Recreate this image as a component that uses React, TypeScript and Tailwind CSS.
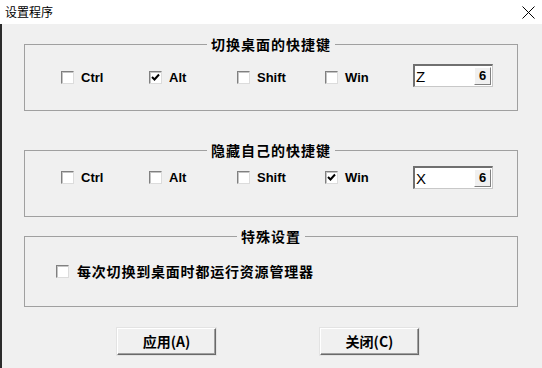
import React from "react";

const cjk = "font-['Noto_Sans_CJK_SC','Noto_Sans',sans-serif]";
const lat = "font-['Liberation_Sans',Arial,sans-serif]";

function CheckBox({ checked }: { checked?: boolean }) {
  return (
    <span className="flex items-center justify-center w-[13px] h-[13px] shrink-0 bg-white border border-t-[#808080] border-l-[#808080] border-r-[#dcdcdc] border-b-[#dcdcdc] shadow-[inset_1px_1px_0_#c4c4c4]">
      {checked && (
        <svg width="9" height="9" viewBox="0 0 9 9">
          <polyline points="1,4 3.5,6.5 8,1.5" fill="none" stroke="#000" strokeWidth="2" />
        </svg>
      )}
    </span>
  );
}

function Item({ label, checked, low }: { label: string; checked?: boolean; low?: boolean }) {
  return (
    <div className={`w-[88px] flex items-center ${low ? "pt-[3px]" : ""}`}>
      <CheckBox checked={checked} />
      <span className={`ml-[7px] text-[13px] font-bold text-black leading-none ${lat}`}>{label}</span>
    </div>
  );
}

function KeyBox({ ch }: { ch: string }) {
  return (
    <div className="w-[80px] h-[23px] bg-white border-t-2 border-l-2 border-r border-b border-t-[#707070] border-l-[#707070] border-r-[#c8c8c8] border-b-[#c8c8c8] flex items-center justify-between pl-[1px] pr-[1px]">
      <span className={`text-[15px] leading-none text-black ${lat}`}>{ch}</span>
      <span className={`w-[17px] h-[18px] flex items-center justify-center bg-[#f0f0f0] border border-t-white border-l-white border-r-[#808080] border-b-[#808080] text-[13px] font-bold text-black ${lat}`}>
        6
      </span>
    </div>
  );
}

function Group({ title, pt, pb, children }: { title: string; pt: string; pb: string; children: React.ReactNode }) {
  return (
    <fieldset className={`w-[494px] border border-[#a0a0a0] ${pt} ${pb}`}>
      <legend className={`mx-auto px-[4px] h-[16px] leading-[16px] text-[14px] font-bold tracking-[1px] text-black ${cjk}`}>
        {title}
      </legend>
      {children}
    </fieldset>
  );
}

function Btn({ label }: { label: string }) {
  return (
    <button className={`w-[99px] h-[27px] bg-[#f0f0f0] border border-t-[#ffffff] border-l-[#ffffff] border-r-[#696969] border-b-[#696969] shadow-[inset_-1px_-1px_0_#a0a0a0,0_0_0_1px_#e3e3e3] flex items-center justify-center text-[14px] font-bold text-black ${cjk}`}>
      {label}
    </button>
  );
}

export default function App() {
  return (
    <div className="w-[542px] h-[368px] flex flex-col bg-[#f0f0f0] overflow-hidden">
      <div className="h-[24px] bg-white flex items-center justify-between pl-[5px] pr-[7px] shrink-0">
        <span className={`text-[12px] leading-none text-black ${cjk}`}>设置程序</span>
        <svg width="13" height="13" viewBox="0 0 13 13">
          <path d="M0.5 0.5 L12.5 12.5 M12.5 0.5 L0.5 12.5" stroke="#000" strokeWidth="1" />
        </svg>
      </div>
      <div className="flex-1 flex flex-col border-l-2 border-[#2b2b2b] pl-[22px]">
        <div className="mt-[12px]">
          <Group title="切换桌面的快捷键" pt="pt-[12px]" pb="pb-[23px]">
            <div className="h-[23px] flex items-center pl-[36px]">
              <Item label="Ctrl" low />
              <Item label="Alt" checked low />
              <Item label="Shift" low />
              <Item label="Win" low />
              <KeyBox ch="Z" />
            </div>
          </Group>
        </div>
        <div className="mt-[31px]">
          <Group title="隐藏自己的快捷键" pt="pt-[8px]" pb="pb-[27px]">
            <div className="h-[23px] flex items-center pl-[36px]">
              <Item label="Ctrl" />
              <Item label="Alt" />
              <Item label="Shift" />
              <Item label="Win" checked />
              <KeyBox ch="X" />
            </div>
          </Group>
        </div>
        <div className="mt-[11px]">
          <Group title="特殊设置" pt="pt-[16px]" pb="pb-[23px]">
            <div className="h-[23px] flex items-center pl-[31px]">
              <CheckBox />
              <span className={`ml-[8px] text-[14px] font-bold tracking-[0.8px] text-black ${cjk}`}>
                每次切换到桌面时都运行资源管理器
              </span>
            </div>
          </Group>
        </div>
        <div className="mt-[21px] flex pl-[93px] gap-[104px]">
          <Btn label="应用(A)" />
          <Btn label="关闭(C)" />
        </div>
      </div>
    </div>
  );
}
